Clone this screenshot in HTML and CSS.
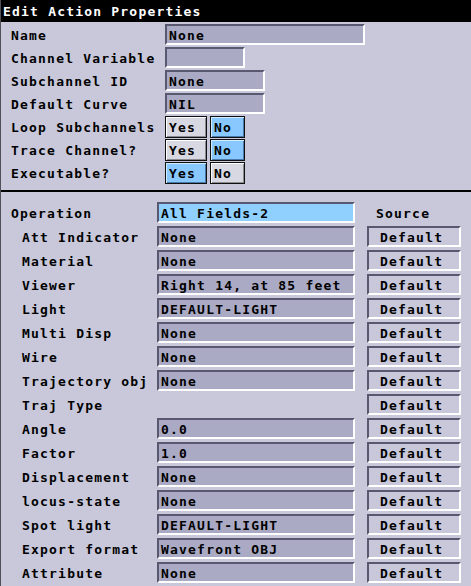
FILE: index.html
```html
<!DOCTYPE html>
<html>
<head>
<meta charset="utf-8">
<link rel="stylesheet" href="styles.css">
</head>
<body>
<div class="window">
  <div class="title">Edit Action Properties</div>
  <div class="top">
    <div class="row"><span class="label">Name</span><span class="field w200">None</span></div>
    <div class="row"><span class="label">Channel Variable</span><span class="field w80"></span></div>
    <div class="row"><span class="label">Subchannel ID</span><span class="field w100">None</span></div>
    <div class="row"><span class="label">Default Curve</span><span class="field w100">NIL</span></div>
    <div class="row"><span class="label">Loop Subchannels</span><span class="btn yes">Yes</span><span class="btn no on">No</span></div>
    <div class="row"><span class="label">Trace Channel?</span><span class="btn yes">Yes</span><span class="btn no on">No</span></div>
    <div class="row"><span class="label">Executable?</span><span class="btn yes on">Yes</span><span class="btn no">No</span></div>
  </div>
  <div class="divider"></div>
  <div class="bottom">
    <div class="row2"><span class="label2">Operation</span><span class="field2 blue">All Fields-2</span><span class="src">Source</span></div>
    <div class="row2"><span class="label2 ind">Att Indicator</span><span class="field2">None</span><span class="def">Default</span></div>
    <div class="row2"><span class="label2 ind">Material</span><span class="field2">None</span><span class="def">Default</span></div>
    <div class="row2"><span class="label2 ind">Viewer</span><span class="field2">Right 14, at 85 feet</span><span class="def">Default</span></div>
    <div class="row2"><span class="label2 ind">Light</span><span class="field2">DEFAULT-LIGHT</span><span class="def">Default</span></div>
    <div class="row2"><span class="label2 ind">Multi Disp</span><span class="field2">None</span><span class="def">Default</span></div>
    <div class="row2"><span class="label2 ind">Wire</span><span class="field2">None</span><span class="def">Default</span></div>
    <div class="row2"><span class="label2 ind">Trajectory obj</span><span class="field2">None</span><span class="def">Default</span></div>
    <div class="row2"><span class="label2 ind">Traj Type</span><span class="nofield"></span><span class="def">Default</span></div>
    <div class="row2"><span class="label2 ind">Angle</span><span class="field2">0.0</span><span class="def">Default</span></div>
    <div class="row2"><span class="label2 ind">Factor</span><span class="field2">1.0</span><span class="def">Default</span></div>
    <div class="row2"><span class="label2 ind">Displacement</span><span class="field2">None</span><span class="def">Default</span></div>
    <div class="row2"><span class="label2 ind">locus-state</span><span class="field2">None</span><span class="def">Default</span></div>
    <div class="row2"><span class="label2 ind">Spot light</span><span class="field2">DEFAULT-LIGHT</span><span class="def">Default</span></div>
    <div class="row2"><span class="label2 ind">Export format</span><span class="field2">Wavefront OBJ</span><span class="def">Default</span></div>
    <div class="row2"><span class="label2 ind">Attribute</span><span class="field2">None</span><span class="def">Default</span></div>
  </div>
</div>
</body>
</html>
```

FILE: styles.css
```css
html, body {
  margin: 0;
  padding: 0;
}
body {
  width: 471px;
  height: 586px;
  overflow: hidden;
  font-family: "DejaVu Sans Mono", "Liberation Mono", monospace;
  font-weight: bold;
  font-size: 13px;
  letter-spacing: 1.2px;
  color: #000;
}
.window {
  height: 586px;
  box-sizing: border-box;
  border-left: 1px solid #505058;
  background: #c8c8da;
}
.title {
  height: 22px;
  background: #000;
  color: #fff;
  padding-left: 2px;
  line-height: 24px;
  font-size: 13px;
}
.top {
  display: flex;
  flex-direction: column;
  gap: 2px;
  padding: 2px 0 0 10px;
}
.row {
  display: flex;
  align-items: stretch;
  height: 21px;
}
.label {
  width: 154px;
  line-height: 23px;
  white-space: pre;
}
.field, .field2, .def {
  box-sizing: border-box;
  border-top: 2px solid #585870;
  border-left: 2px solid #585870;
  border-bottom: 2px solid #fff;
  border-right: 2px solid #fff;
  line-height: 19px;
  white-space: pre;
}
.field, .field2 {
  background: #aaaac4;
  padding-left: 2px;
}
.w200 { width: 200px; }
.w80 { width: 80px; }
.w100 { width: 100px; }
.btn {
  box-sizing: border-box;
  height: 22px;
  border: 1px solid #101010;
  box-shadow: inset 1px 1px 0 #fff, inset -1px -1px 0 #8a8a90;
  background: #d8d8e2;
  line-height: 22px;
  padding-left: 3px;
}
.btn.yes { width: 42px; }
.btn.no { width: 35px; margin-left: 3px; }
.btn.on {
  background: #88c8ff;
  box-shadow: inset 1px 1px 0 #d0ecff, inset -1px -1px 0 #4a78a8;
}
.divider {
  height: 2px;
  background: #000;
  margin-top: 7px;
}
.bottom {
  display: flex;
  flex-direction: column;
  gap: 3px;
  padding: 10px 0 0 10px;
}
.row2 {
  display: flex;
  height: 21px;
}
.label2 {
  width: 146px;
  line-height: 23px;
  white-space: pre;
}
.label2.ind { padding-left: 11px; box-sizing: border-box; }
.field2 {
  width: 198px;
}
.field2.blue {
  background: #90d0ff;
}
.nofield { width: 198px; }
.def {
  width: 94px;
  margin-left: 12px;
  background: transparent;
  padding-left: 11px;
}
.src {
  width: 94px;
  margin-left: 12px;
  line-height: 23px;
  padding-left: 9px;
  box-sizing: border-box;
}
```
